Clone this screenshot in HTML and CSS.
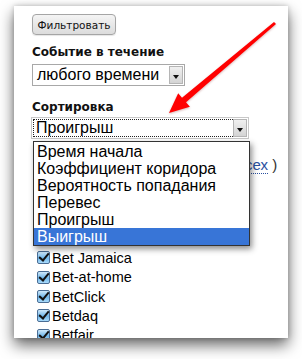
FILE: index.html
```html
<!DOCTYPE html>
<html lang="ru">
<head>
  <meta charset="UTF-8">
  <title>Фильтр</title>
  <link rel="stylesheet" href="styles.css">
</head>
<body>

<div class="panel">
  <button class="filter-btn" type="button">Фильтровать</button>

  <div class="label">Событие в течение</div>
  <div class="select select-period">
    <span class="select-value">любого времени</span>
    <span class="select-arrow"></span>
  </div>

  <div class="label label-sort">Сортировка</div>
  <div class="sort-wrap">
    <div class="select select-sort">
      <span class="select-value">Проигрыш</span>
      <span class="select-arrow"></span>
    </div>

    <!-- раскрытый список -->
    <ul class="dropdown">
      <li>Время начала</li>
      <li>Коэффициент коридора</li>
      <li>Вероятность попадания</li>
      <li>Перевес</li>
      <li>Проигрыш</li>
      <li class="active">Выигрыш</li>
    </ul>
  </div>

  <div class="bk-head">( <a href="#">всех</a> )</div>

  <ul class="bk-list">
    <li><span class="check"></span>Bet365</li>
    <li><span class="check"></span>Bet Jamaica</li>
    <li><span class="check"></span>Bet-at-home</li>
    <li><span class="check"></span>BetClick</li>
    <li><span class="check"></span>Betdaq</li>
    <li><span class="check"></span>Betfair</li>
  </ul>
</div>

<!-- красная стрелка поверх скриншота -->
<svg class="pointer" width="302" height="359" viewBox="0 0 302 359">
  <polygon fill="#f00" points="274,21.9 182,97.7 178.2,93.2 169,113 189.9,106.8 186,102.3 276,24.1"/>
</svg>

</body>
</html>
```

FILE: styles.css
```css
* {
  margin: 0;
  padding: 0;
  box-sizing: border-box;
}

body {
  background: #fff;
  width: 302px;
  height: 359px;
  overflow: hidden;
  position: relative;
  font-family: 'Liberation Sans', Arial, sans-serif;
  color: #000;
}

.panel {
  margin: 6px 0 0 14px;
  width: 274px;
  height: 332px;
  background: #fff;
  overflow: hidden;
  padding: 8px 0 0 18px;
  box-shadow: 0 7px 14px rgba(0, 0, 0, 0.6), 0 0 5px rgba(0, 0, 0, 0.2);
}

.filter-btn {
  display: block;
  width: 84px;
  height: 21px;
  font-family: 'DejaVu Sans', sans-serif;
  font-size: 10.5px;
  color: #111;
  border: 1px solid #a5a5a5;
  border-radius: 4px;
  background: linear-gradient(#f4f4f4, #dcdcdc);
  box-shadow: 0 1px 1px rgba(0, 0, 0, 0.1);
}

.label {
  font-family: 'DejaVu Sans', sans-serif;
  font-weight: bold;
  font-size: 12px;
  line-height: 16px;
  margin-top: 9px;
  color: #111;
}

.label-sort {
  margin-top: 13px;
}

.select {
  position: relative;
  height: 22px;
  border: 1px solid #a8a8a8;
  background: #fff;
  font-size: 16px;
  line-height: 20px;
  padding-left: 4px;
  margin-top: 4px;
}

.select-period {
  width: 153px;
}

.sort-wrap {
  position: relative;
  margin-left: -1px;
}

.select-sort {
  width: 218px;
  margin-top: 2px;
  outline: 1px dotted #222;
  outline-offset: -3px;
  border-color: #c8c8c8;
}

.select-arrow {
  position: absolute;
  right: 1px;
  top: 1px;
  width: 14px;
  height: 18px;
  border: 1px solid #b5b5b5;
  background: linear-gradient(#f0f0f0, #d4d4d4);
}

.select-arrow::after {
  content: "";
  position: absolute;
  left: 3px;
  top: 8px;
  border-left: 3.5px solid transparent;
  border-right: 3.5px solid transparent;
  border-top: 4px solid #111;
}

.dropdown {
  list-style: none;
  position: absolute;
  left: 2px;
  top: 24px;
  width: 217px;
  background: #fff;
  border: 1px solid #333;
  padding-top: 1px;
  box-shadow: 2px 3px 6px rgba(0, 0, 0, 0.45);
  z-index: 2;
  font-size: 16px;
}

.dropdown li {
  height: 17px;
  line-height: 17px;
  padding-left: 3px;
}

.dropdown li.active {
  background: #3875d7;
  color: #fff;
}

.bk-head {
  margin-top: 17px;
  font-size: 15px;
  color: #333;
  padding-left: 196px;
  white-space: nowrap;
}

.bk-head a {
  color: #2a50a0;
  text-decoration: none;
  border-bottom: 1px dotted #2a50a0;
}

.bk-list {
  list-style: none;
  margin-top: 56px;
  padding-left: 5px;
  font-size: 14.5px;
}

.bk-list li {
  display: flex;
  align-items: center;
  height: 19.3px;
}

.check {
  width: 13px;
  height: 13px;
  margin-right: 2px;
  border: 1px solid #4a6d94;
  border-radius: 2px;
  background: linear-gradient(#cfe9fb, #6fb6ea 55%, #a9dafa);
  position: relative;
}

.check::after {
  content: "";
  position: absolute;
  left: 3px;
  top: -1px;
  width: 4px;
  height: 8px;
  border-right: 2px solid #111;
  border-bottom: 2px solid #111;
  transform: rotate(40deg);
}

.pointer {
  position: absolute;
  left: 0;
  top: 0;
  filter: drop-shadow(0 1px 1px rgba(120, 0, 0, 0.3));
}
```
